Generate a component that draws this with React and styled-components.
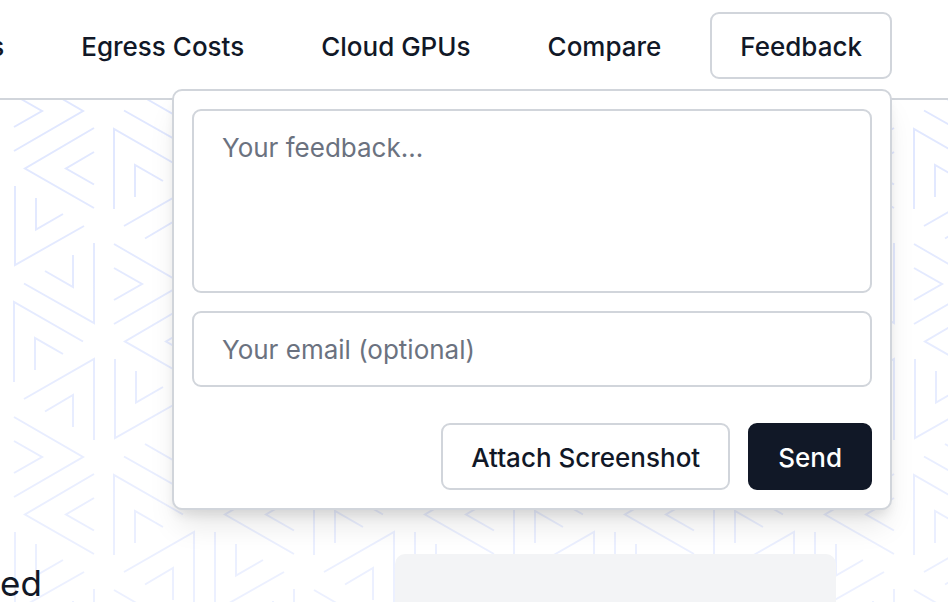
import React, { useState } from "react";
import styled, { createGlobalStyle } from "styled-components";

const links = ["s", "Egress Costs", "Cloud GPUs", "Compare"];

// one column of the triangle pattern, the second column is the same one shifted
const trianglePaths = [
  "M14 95L42 111L14 127",
  "M14 71L83 111L14 151",
  "M94 128L25 168.5L94 208",
  "M94 152L66 168.5L94 184.5",
  "M15 186V265L84 226",
  "M36 198V229.5L63 214",
  "M24 283.5L94 323V243",
  "M45 271L73 287V255",
  "M83 341.5L14 302V382",
  "M63 354L35 338V370",
  "M24 399L94 359V440",
  "M45 411.5L73 395V427",
];

function TrianglePattern() {
  return (
    <PatternSvg aria-hidden="true">
      <defs>
        <g id="column" fill="none" stroke="#e0e7ff" strokeWidth="2">
          {trianglePaths.map((d) => (
            <path key={d} d={d} />
          ))}
        </g>
        <pattern
          id="triangles"
          width="200"
          height="346"
          y="-100"
          patternUnits="userSpaceOnUse"
        >
          <use href="#column" />
          <use href="#column" y="-346" />
          <use href="#column" x="100" y="173" />
          <use href="#column" x="100" y="-173" />
        </pattern>
        <linearGradient id="fade" x1="0" y1="0" x2="0" y2="1">
          <stop offset="0" stopColor="#fff" stopOpacity="0" />
          <stop offset="1" stopColor="#fff" stopOpacity="0.4" />
        </linearGradient>
      </defs>
      <rect width="100%" height="100%" fill="url(#triangles)" />
      <rect width="100%" height="100%" fill="url(#fade)" />
    </PatternSvg>
  );
}

function FeedbackForm() {
  return (
    <Panel onSubmit={(e) => e.preventDefault()}>
      <Message aria-label="Your feedback" placeholder="Your feedback..." />
      <Email
        type="email"
        aria-label="Your email (optional)"
        placeholder="Your email (optional)"
      />
      <Actions>
        <Button type="button">Attach Screenshot</Button>
        <Button type="submit" $primary>
          Send
        </Button>
      </Actions>
    </Panel>
  );
}

export default function App() {
  const [open, setOpen] = useState(true);

  return (
    <Page>
      <GlobalStyle />
      <Header>
        <Nav>
          {links.map((name) => (
            <NavLink key={name} href="#">
              {name}
            </NavLink>
          ))}
        </Nav>
        <Feedback>
          <Button
            type="button"
            aria-expanded={open}
            onClick={() => setOpen(!open)}
          >
            Feedback
          </Button>
          {open && <FeedbackForm />}
        </Feedback>
      </Header>
      <Hero>
        <TrianglePattern />
        <Intro>ed</Intro>
        <Card />
      </Hero>
    </Page>
  );
}

const GlobalStyle = createGlobalStyle`
  * {
    box-sizing: border-box;
  }
  body {
    margin: 0;
    background: #fff;
    color: #111827;
    font-family: Inter, "Liberation Sans", sans-serif;
  }
  button, input, textarea {
    font-family: inherit;
  }
`;

const Page = styled.div`
  display: flex;
  flex-direction: column;
  height: 100vh;
  overflow: hidden;
`;

const Header = styled.header`
  position: relative;
  z-index: 1;
  display: flex;
  align-items: flex-start;
  justify-content: flex-end;
  gap: 21px;
  padding: 12px 56px 19px 0;
  background: #fff;
  border-bottom: 2px solid #d1d5db;
`;

const Nav = styled.nav`
  display: flex;
  gap: 21px;
`;

const NavLink = styled.a`
  padding: 16px 28px 14px;
  color: #111827;
  font-size: 26px;
  font-weight: 500;
  line-height: 37px;
  text-decoration: none;
  white-space: nowrap;
`;

const Feedback = styled.div`
  position: relative;
`;

const Button = styled.button`
  padding: 14px 28px 12px;
  border: 2px solid ${(props) => (props.$primary ? "#111827" : "#d1d5db")};
  border-radius: 9px;
  background: ${(props) => (props.$primary ? "#111827" : "#fff")};
  color: ${(props) => (props.$primary ? "#fff" : "#111827")};
  font-size: 26px;
  font-weight: 500;
  line-height: 37px;
  white-space: nowrap;
  cursor: pointer;
`;

const Panel = styled.form`
  position: absolute;
  top: 100%;
  right: 0;
  display: flex;
  flex-direction: column;
  gap: 18px;
  width: 720px;
  margin-top: 10px;
  padding: 18px;
  border: 2px solid #d1d5db;
  border-radius: 10px;
  background: #fff;
  box-shadow:
    0 20px 30px -6px rgba(0, 0, 0, 0.1),
    0 8px 12px -4px rgba(0, 0, 0, 0.1);
`;

const Message = styled.textarea`
  height: 184px;
  padding: 18px 28px;
  border: 2px solid #d1d5db;
  border-radius: 9px;
  background: #fff;
  color: #111827;
  font-size: 26px;
  line-height: 37px;
  resize: none;
  &::placeholder {
    color: #6b7280;
  }
`;

const Email = styled.input`
  padding: 18px 28px 17px;
  border: 2px solid #d1d5db;
  border-radius: 9px;
  background: #fff;
  color: #111827;
  font-size: 26px;
  line-height: 37px;
  &::placeholder {
    color: #6b7280;
  }
`;

const Actions = styled.div`
  display: flex;
  justify-content: flex-end;
  gap: 18px;
  padding-top: 18px;
`;

const Hero = styled.main`
  position: relative;
  flex: 1;
  display: grid;
  grid-template-columns: minmax(0, 1fr) minmax(0, 441px);
  padding: 454px 112px 0 0;
`;

const PatternSvg = styled.svg`
  position: absolute;
  inset: 0;
  width: 100%;
  height: 100%;
`;

const Intro = styled.p`
  position: relative;
  margin: 0;
  padding-top: 11px;
  font-size: 35px;
  line-height: 36px;
`;

const Card = styled.div`
  position: relative;
  border-radius: 10px 10px 0 0;
  background: #f3f4f6;
`;
